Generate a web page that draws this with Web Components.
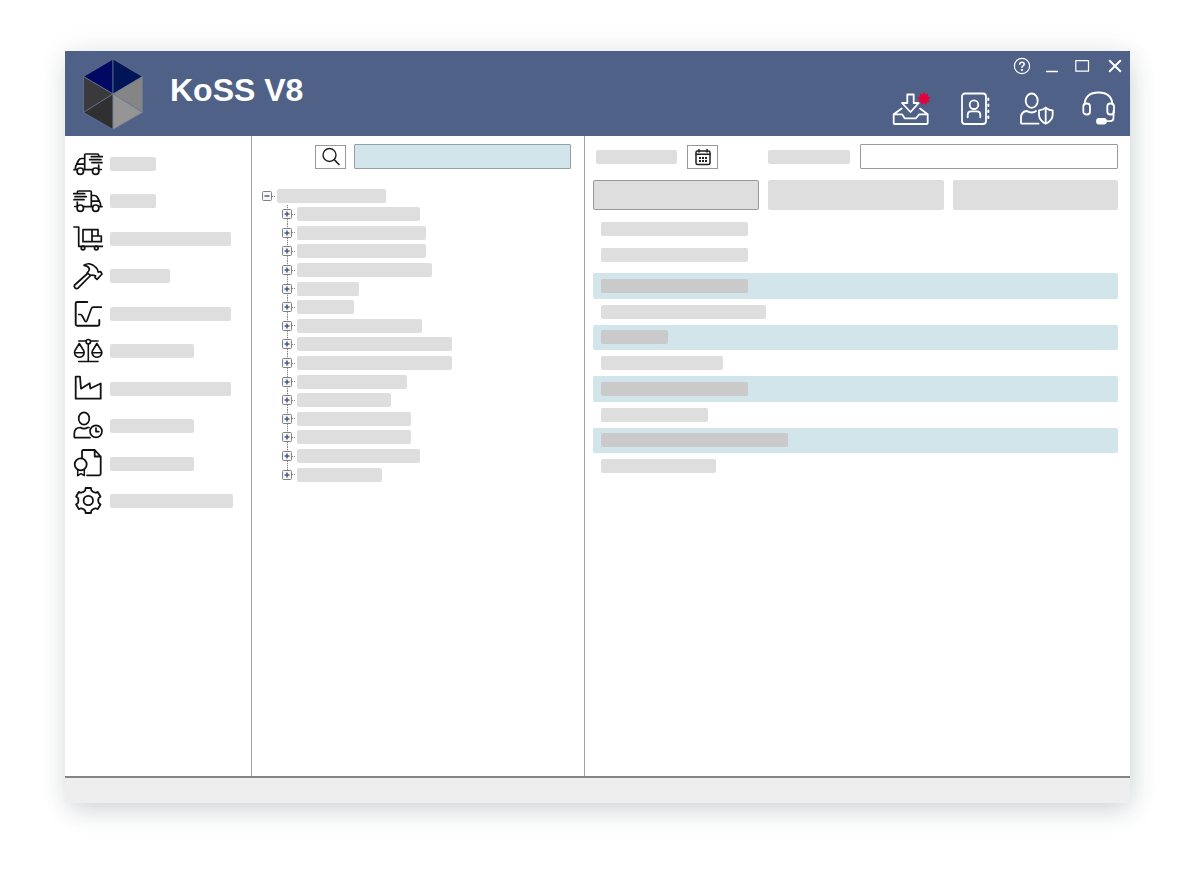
<!DOCTYPE html>
<html lang="en">
<head>
<meta charset="utf-8">
<title>KoSS V8</title>
<style>
    body {
        margin: 0;
        background: #fff;
        font-family: "Liberation Sans", Arial, sans-serif;
        --line: #a3a3a3;
        --bar: #dedede;
        --tint: #d1e5eb;
    }
</style>
</head>
<body>

<template id="app-window">
    <style>
        :host {
            display: flex;
            flex-direction: column;
            box-sizing: border-box;
            min-height: calc(100vh - 118px);
            margin: 51px 70px 67px 65px;
            background: #fff;
            box-shadow: 0 0 28px rgba(0, 0, 0, .08), 3px 10px 26px -4px rgba(40, 60, 70, .18);
        }
        .body {
            flex: 1;
            display: grid;
            grid-template-columns: 187px 333px 1fr;
            border-bottom: 2px solid #858585;
        }
        footer { height: 25px; background: #eee; }
    </style>
    <slot name="header"></slot>
    <div class="body"><slot></slot></div>
    <footer></footer>
</template>

<template id="app-header">
    <style>
        :host {
            display: flex;
            height: 85px;
            background: #506188;
            color: #fff;
        }
        .brand { flex: 1; display: flex; align-items: center; gap: 27px; padding-left: 18px; }
        h1 { margin: 0; padding-bottom: 8px; font-size: 32px; line-height: 36px; font-weight: bold; }
        .side { display: flex; flex-direction: column; align-items: flex-end; gap: 15px; padding: 6px 6px 0 0; }
        .controls { display: flex; gap: 13px; }
        .actions { display: flex; gap: 26px; padding-right: 7px; }
    </style>
    <div class="brand">
        <svg width="60" height="72" viewBox="0 0 60 72" aria-hidden="true">
            <g stroke="#6b7896" stroke-width=".7">
                <path d="M30 36V1L.5 18.500z" fill="#000862"/>
                <path d="M30 36V1l29.500 17.500z" fill="#001458"/>
                <path d="M30 36L.5 18.500v36z" fill="#3a3a3c"/>
                <path d="M30 36L.5 54.500 30 71.500z" fill="#303031"/>
                <path d="M30 36l29.500-17.500v36z" fill="#858585"/>
                <path d="M30 36l29.500 18.500L30 71.500z" fill="#959595"/>
            </g>
        </svg>
        <h1><slot></slot></h1>
    </div>
    <div class="side">
        <div class="controls"><slot name="controls"></slot></div>
        <div class="actions"><slot name="actions"></slot></div>
    </div>
</template>

<template id="side-nav">
    <style>
        :host { display: block; padding-top: 9px; border-right: 1px solid var(--line); }
        nav { display: grid; grid-auto-rows: 1fr; height: 375px; }
    </style>
    <nav aria-label="Modules"><slot></slot></nav>
</template>

<template id="nav-item">
    <style>
        :host { display: flex; }
        button {
            display: flex;
            align-items: center;
            gap: 7px;
            flex: 1;
            padding: 0 0 0 8px;
            border: 0;
            background: none;
            color: #111;
        }
    </style>
    <button><ui-icon></ui-icon><skeleton-bar></skeleton-bar></button>
</template>

<template id="tree-panel">
    <style>
        :host { display: block; border-right: 1px solid var(--line); }
        .search { display: flex; justify-content: flex-end; align-items: center; gap: 8px; padding: 8px 13px 0 0; }
        input {
            box-sizing: border-box;
            width: 217px;
            height: 25px;
            border: 1px solid #93a1a6;
            border-radius: 1px;
            background: var(--tint);
        }
        .tree { padding: 18px 0 0 10px; }
    </style>
    <div class="search">
        <icon-button icon="search" label="Search" boxed></icon-button>
        <input type="search" aria-label="Search term">
    </div>
    <div class="tree" role="tree"><slot></slot></div>
</template>

<template id="tree-node">
    <style>
        :host { display: block; }
        .row { display: flex; align-items: center; height: 100%; }
        :host([open]) .row { height: 18px; }
        :host(:not([open])) {
            background: repeating-linear-gradient(#888 0 1px, #ddd 1px 2px) 5px 0 / 1px 100% no-repeat;
        }
        :host(:last-child:not([open])) { background-size: 1px 50%; }
        button {
            display: flex;
            padding: 0;
            border: 0;
            background: #fff;
        }
        i { width: 3px; margin-right: 2px; border-top: 1px dotted #888; }
        .children { display: none; }
        :host([open]) .children { display: grid; grid-auto-rows: 1fr; height: 279px; margin-left: 20px; }
    </style>
    <div class="row">
        <button aria-label="Toggle">
            <svg width="10" height="10" viewBox="0 0 10 10" fill="none">
                <rect x=".5" y=".5" width="9" height="9" rx="1" fill="#f6f6f6" stroke="#808080"/>
                <path class="minus" d="M2.500 5h5" stroke="#40537e" stroke-width="1.400"/>
                <path class="plus" d="M5 2.500v5" stroke="#40537e" stroke-width="1.400"/>
            </svg>
        </button>
        <i></i>
        <skeleton-bar></skeleton-bar>
    </div>
    <div class="children" role="group"><slot></slot></div>
</template>

<template id="detail-panel">
    <style>
        :host { display: block; min-width: 0; padding: 8px 12px 0 8px; }
        .filters { display: flex; align-items: center; padding-left: 3px; }
        .filters icon-button { margin: 0 50px 0 10px; }
        input {
            flex: 1;
            min-width: 0;
            box-sizing: border-box;
            height: 25px;
            margin-left: 10px;
            border: 1px solid #999;
            border-radius: 1px;
            background: #fff;
        }
        .tabs { display: grid; grid-template-columns: 166fr 177fr 165fr; gap: 9px; margin-top: 11px; }
        .tabs button { height: 30px; padding: 0; border: 0; border-radius: 2px; background: var(--bar); }
        .tabs button[aria-selected=true] { border: 1px solid #999; }
        .head { display: grid; grid-auto-rows: 26px; margin: 6px 0 5px; }
        .list { display: grid; grid-auto-rows: 1fr; height: 206px; }
    </style>
    <div class="filters">
        <skeleton-bar width="81"></skeleton-bar>
        <icon-button icon="calendar" label="Date" boxed></icon-button>
        <skeleton-bar width="82"></skeleton-bar>
        <input type="text" aria-label="Filter">
    </div>
    <div class="tabs" role="tablist">
        <button role="tab" aria-selected="true" aria-label="Tab 1"></button>
        <button role="tab" aria-selected="false" aria-label="Tab 2"></button>
        <button role="tab" aria-selected="false" aria-label="Tab 3"></button>
    </div>
    <div class="head"><slot name="head"></slot></div>
    <div class="list"><slot></slot></div>
</template>

<template id="list-row">
    <style>
        :host { display: flex; align-items: center; padding-left: 8px; border-radius: 2px; }
        :host([marked]) { background: var(--tint); --bar: #cacaca; }
    </style>
    <skeleton-bar></skeleton-bar>
</template>

<template id="icon-button">
    <style>
        :host { display: block; }
        button { display: flex; justify-content: center; align-items: center; padding: 0; border: 0; background: none; color: inherit; }
        :host([boxed]) button { width: 31px; height: 24px; border: 1px solid #999; background: #fff; color: #222; }
    </style>
    <button><ui-icon></ui-icon></button>
</template>

<app-window>
    <app-header slot="header">
        KoSS V8
        <icon-button slot="controls" icon="help" label="Help"></icon-button>
        <icon-button slot="controls" icon="minimize" label="Minimize"></icon-button>
        <icon-button slot="controls" icon="maximize" label="Maximize"></icon-button>
        <icon-button slot="controls" icon="close" label="Close"></icon-button>
        <icon-button slot="actions" icon="inbox" label="Inbox"></icon-button>
        <icon-button slot="actions" icon="contacts" label="Contacts"></icon-button>
        <icon-button slot="actions" icon="admin" label="Permissions"></icon-button>
        <icon-button slot="actions" icon="support" label="Support"></icon-button>
    </app-header>

    <side-nav>
        <nav-item icon="truckIn" label="Incoming" width="46"></nav-item>
        <nav-item icon="truckOut" label="Outgoing" width="46"></nav-item>
        <nav-item icon="cart" label="Warehouse" width="121"></nav-item>
        <nav-item icon="hammer" label="Tools" width="60"></nav-item>
        <nav-item icon="formula" label="Calculation" width="121"></nav-item>
        <nav-item icon="scales" label="Scales" width="84"></nav-item>
        <nav-item icon="factory" label="Production" width="121"></nav-item>
        <nav-item icon="userClock" label="Working time" width="84"></nav-item>
        <nav-item icon="certificate" label="Certificates" width="84"></nav-item>
        <nav-item icon="gear" label="Settings" width="123"></nav-item>
    </side-nav>

    <tree-panel>
        <tree-node width="109" open>
            <tree-node width="123"></tree-node>
            <tree-node width="129"></tree-node>
            <tree-node width="129"></tree-node>
            <tree-node width="135"></tree-node>
            <tree-node width="62"></tree-node>
            <tree-node width="57"></tree-node>
            <tree-node width="125"></tree-node>
            <tree-node width="155"></tree-node>
            <tree-node width="155"></tree-node>
            <tree-node width="110"></tree-node>
            <tree-node width="94"></tree-node>
            <tree-node width="114"></tree-node>
            <tree-node width="114"></tree-node>
            <tree-node width="123"></tree-node>
            <tree-node width="85"></tree-node>
        </tree-node>
    </tree-panel>

    <detail-panel>
        <list-row slot="head" width="147"></list-row>
        <list-row slot="head" width="147"></list-row>
        <list-row width="147" marked></list-row>
        <list-row width="165"></list-row>
        <list-row width="67" marked></list-row>
        <list-row width="122"></list-row>
        <list-row width="147" marked></list-row>
        <list-row width="107"></list-row>
        <list-row width="187" marked></list-row>
        <list-row width="115"></list-row>
    </detail-panel>
</app-window>

<script>
    // closed outline that alternates between radii around a centre; steps are [degrees, radius]
    function ring(cx, cy, count, steps) {
        const points = [];
        for (let i = 0; i < count; i++) {
            for (const [deg, r] of steps) {
                const a = (i * 360 / count - 90 + deg) * Math.PI / 180;
                points.push((cx + r * Math.cos(a)).toFixed(2) + ' ' + (cy + r * Math.sin(a)).toFixed(2));
            }
        }
        return 'M' + points.join('L') + 'z';
    }

    const truck = `
        <path d="M11.700 20.500V6q0-1 1-1H24.500q1.200 0 1.200 1.200M25.700 16v4.500h2.500M1 20.700h3M10.500 20.700h9M11.700 9.500H8.500Q6.500 9.500 5.500 11.500L3.500 15.500Q2.500 17 2.500 18.500v2M4 15.200h7.700"/>
        <path d="M18.300 7.700h11.400M16.700 10.700H28M19 13.700h10"/>
        <circle cx="7.300" cy="22.200" r="3.200"/><circle cx="22.700" cy="22.200" r="3.200"/>`;

    // name: [width, height, stroke width, markup]
    const icons = {
        truckIn: [30, 30, 1.7, truck],
        truckOut: [30, 30, 1.7, `<g transform="matrix(-1 0 0 1 30 0)">${truck}</g>`],
        cart: [30, 30, 1.7, `
            <path d="M1 3h4.700v19.300H29.500M10 5.700h15V12M10 5.700v12h18.300V12H19M19 5.700v12"/>
            <circle cx="10" cy="24" r="1.800"/><circle cx="23.300" cy="24" r="1.800"/>`],
        hammer: [30, 30, 1.7, `
            <path d="M14.500 12.500L1.700 24Q.8 25.500 2 26.800T5 27.200L17.500 14.500"/>
            <path d="M11 4.300Q13.500 2.500 16.500 2.800 20 3.200 22.700 6.200 25 8.500 25.200 11.200L27.500 10.500 29 13 24 18.300 22 16.700 22.500 14.800Q19.500 13.700 17.300 14.500L14.300 11.700Q17 9.500 16 7 14.500 4.500 11 4.300z"/>`],
        formula: [30, 30, 1.7, `
            <path d="M14.300 3H4.200Q2.700 3 2.700 4.500v20.700q0 1.500 1.500 1.500h20.600q1.500 0 1.500-1.500V21" stroke-width="1.900"/>
            <path d="M5.700 15.500h1.500Q8.300 15.500 9 16.500l3 5.500q1.200 1.500 2-.5l4.200-11.500Q18.700 8.200 20.500 8.200h7.800"/>`],
        scales: [30, 30, 1.6, `
            <path d="M5.700 5H13M17.600 5H25M15.300 8.200V25M5.700 25.500H25"/>
            <circle cx="15.300" cy="5.700" r="2.200"/>
            <path d="M6.300 7.500L2 14.500Q1 16.500 1.700 18q1.300 3.300 4.700 3.300T11 18q.7-1.500-.4-3.500zM1.500 16.700h9.700"/>
            <path d="M23.900 7.500l-4.300 7q-1 2-.3 3.500 1.300 3.300 4.700 3.300t4.600-3.300q.7-1.500-.4-3.500zM19.100 16.700h9.700"/>`],
        factory: [30, 30, 1.8, `<path d="M2.700 2.700H7l1 12 8.700-5.400.6 5.200 10.400-5v15.200h-25z"/>`],
        userClock: [30, 30, 1.7, `
            <ellipse cx="11" cy="7.500" rx="5.300" ry="6.200"/>
            <path d="M17 26.700H2.200q-.9 0-.9-1V23q0-6.500 6.200-6.500Q9 17.700 11 17.700t3.500-1.200h1.500"/>
            <circle cx="23" cy="20.300" r="6"/><path d="M23 17v3.600h2.800"/>`],
        certificate: [30, 30, 1.8, `
            <path d="M9 9V2.500Q9 1 10.500 1h11.200l6 6.500v17.300q0 1.500-1.500 1.500H14M21.700 1v6.500h6"/>
            <circle cx="7.700" cy="15.300" r="6"/>
            <path d="M4.700 21v5.700L8 24.700l3.300 2V21" stroke-width="1.500"/>`],
        gear: [30, 30, 1.8, `
            <path d="${ring(15.3, 14.5, 6, [[-26, 10], [-17, 10.6], [-12, 12.8], [12, 12.8], [17, 10.6], [26, 10]])}"/>
            <circle cx="15.300" cy="14.500" r="4.700"/>`],
        search: [20, 20, 1.4, `<circle cx="8.500" cy="8" r="6.500"/><path d="M13.200 12.700L18 17.500" stroke-width="1.700"/>`],
        calendar: [18, 18, 1.5, `
            <rect x="2" y="3" width="14" height="13.500" rx="1.500"/>
            <path d="M2 6.300h14M5 1.500v2.500M13 1.500v2.500"/>
            <path d="M5 10h2M8 10h2M11 10h2M5 13h2M8 13h2M11 13h2" stroke-width="2" stroke-linecap="butt"/>`],
        help: [18, 18, 1.2, `
            <circle cx="9" cy="9" r="7.600"/>
            <path d="M6.800 7.300Q6.800 5.200 9 5.200t2.200 1.900Q11.200 8.200 10 8.900 9 9.500 9 10.600" stroke-width="1.500"/>
            <circle cx="9" cy="13" r=".5"/>`],
        minimize: [18, 18, 1.3, `<path d="M2.500 14.500h11"/>`],
        maximize: [18, 18, 1.2, `<path d="M.8 3.700h12.700v10.500H.8z" stroke-linejoin="miter"/>`],
        close: [18, 18, 2, `<path d="M3.700 3.700l10.600 10.600M14.300 3.700L3.700 14.300"/>`],
        inbox: [40, 36, 1.8, `
            <g transform="translate(1 0)">
                <path d="M15.300 4.500h6.400v8.500h5L18.500 22 10 13h5.300z"/>
                <path d="M9.700 18.500l-8 5.800v8.700q0 1 1 1h32q1 0 1-1v-8.700L28 18.500M2 24.300h8l2.700 4H24l3.300-4h8"/>
                <path d="${ring(32, 8.7, 9, [[0, 7], [20, 4.2]])}" fill="#e4003a" stroke="none"/>
            </g>`],
        contacts: [36, 36, 1.8, `
            <rect x="5" y="3.500" width="24" height="30.500" rx="3"/>
            <circle cx="17" cy="14.700" r="4.300"/>
            <path d="M10.700 27.300v-2.500q0-3.500 3.500-3.500h5.600q3.500 0 3.500 3.500v2.500"/>
            <path d="M31.300 8.500v1.600M31.300 14.500v1.600M31.300 20.500v1.600M31.300 26.500v1.600" stroke-width="2"/>`],
        admin: [36, 36, 1.8, `
            <g transform="translate(-1 0)">
                <ellipse cx="13.700" cy="10.700" rx="6" ry="7.200"/>
                <path d="M20.500 33.700H4q-1 0-1-1V28q0-6.700 6-7 2 1.500 4.700 1.500T18 21"/>
                <path d="M27.700 17.700q3 2.500 7 2.600v4.200q0 6-7 9.200-6.700-3.200-6.700-9.200v-4.200q4-.1 6.700-2.600zM27.700 17.700v16"/>
            </g>`],
        support: [36, 36, 1.8, `
            <path d="M3.500 14.500Q4.500 2.500 17.500 2.500T31.500 14.500"/>
            <rect x="2.300" y="13.500" width="6.700" height="11" rx="3"/>
            <rect x="26.300" y="13.500" width="6.700" height="11" rx="3"/>
            <path d="M32.500 21v6.500q0 3.700-3.500 3.700h-4"/>
            <rect x="16" y="29" width="9" height="4.500" rx="2" fill="currentColor"/>`]
    };

    class BaseElement extends HTMLElement {
        connectedCallback() {
            if (this.shadowRoot) return;
            const root = this.attachShadow({ mode: 'open' });
            root.appendChild(document.getElementById(this.localName).content.cloneNode(true));
            this.setup(root);
        }

        setup(root) { }

        // hand an attribute of the host on to an inner element
        pass(name, selector, target = name) {
            if (this.hasAttribute(name)) {
                this.shadowRoot.querySelector(selector).setAttribute(target, this.getAttribute(name));
            }
        }
    }

    class UiIcon extends HTMLElement {
        static get observedAttributes() {
            return ['name'];
        }

        constructor() {
            super();
            this.attachShadow({ mode: 'open' });
        }

        attributeChangedCallback(attributeName, oldValue, newValue) {
            const [w, h, stroke, body] = icons[newValue];
            this.shadowRoot.innerHTML = `
                <style>:host { display: block; } svg { display: block; }</style>
                <svg width="${w}" height="${h}" viewBox="0 0 ${w} ${h}" fill="none" stroke="currentColor"
                    stroke-width="${stroke}" stroke-linecap="round" stroke-linejoin="round" aria-hidden="true">${body}</svg>`;
        }
    }

    class SkeletonBar extends HTMLElement {
        static get observedAttributes() {
            return ['width'];
        }

        constructor() {
            super();
            this.attachShadow({ mode: 'open' });
        }

        attributeChangedCallback(attributeName, oldValue, newValue) {
            this.shadowRoot.innerHTML = `
                <style>:host { display: block; width: ${newValue}px; height: 14px; border-radius: 2px; background: var(--bar); }</style>`;
        }
    }

    class IconButton extends BaseElement {
        setup() {
            this.pass('icon', 'ui-icon', 'name');
            this.pass('label', 'button', 'aria-label');
        }
    }

    class NavItem extends BaseElement {
        setup() {
            this.pass('icon', 'ui-icon', 'name');
            this.pass('label', 'button', 'aria-label');
            this.pass('width', 'skeleton-bar');
        }
    }

    class TreeNode extends BaseElement {
        setup(root) {
            this.setAttribute('role', 'treeitem');
            this.pass('width', 'skeleton-bar');
            if (this.hasAttribute('open')) {
                root.querySelector('.plus').remove();
            }
        }
    }

    class ListRow extends BaseElement {
        setup() {
            this.pass('width', 'skeleton-bar');
        }
    }

    customElements.define('ui-icon', UiIcon);
    customElements.define('skeleton-bar', SkeletonBar);
    customElements.define('icon-button', IconButton);
    customElements.define('nav-item', NavItem);
    customElements.define('tree-node', TreeNode);
    customElements.define('list-row', ListRow);
    customElements.define('app-window', class extends BaseElement { });
    customElements.define('app-header', class extends BaseElement { });
    customElements.define('side-nav', class extends BaseElement { });
    customElements.define('tree-panel', class extends BaseElement { });
    customElements.define('detail-panel', class extends BaseElement { });
</script>
</body>
</html>
